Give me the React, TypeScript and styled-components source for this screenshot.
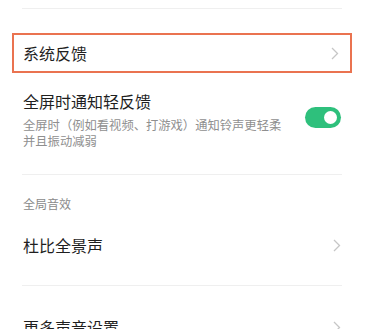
import React from 'react';
import styled, { createGlobalStyle } from 'styled-components';

const GlobalStyle = createGlobalStyle`
  html, body {
    margin: 0;
    padding: 0;
    background: #ffffff;
  }
  body {
    font-family: "Noto Sans CJK SC", "Noto Sans", sans-serif;
    color: #1f1f1f;
  }
`;

const Page = styled.div`
  width: 375px;
  height: 329px;
  overflow: hidden;
  background: #fff;
  padding: 8px 34px 0 23px;
  box-sizing: border-box;
`;

const Divider = styled.div<{ $gap: number }>`
  height: 1px;
  background: #efefef;
  margin: 0 -1px ${(p) => p.$gap}px -1px;
`;

const Row = styled.div<{ $highlight?: boolean }>`
  display: flex;
  align-items: center;
  justify-content: space-between;
  box-sizing: border-box;
  ${(p) =>
    p.$highlight
      ? `
    height: 40px;
    margin: 0 -11px;
    padding: 0 11px 0 9px;
    border: 2px solid #ea7350;
  `
      : ''}
`;

const Title = styled.div`
  font-size: 16px;
  line-height: 22px;
  color: #1f1f1f;
`;

const SubBlock = styled.div`
  display: flex;
  flex-direction: column;
  margin-top: 5px;
`;

const Sub = styled.span`
  font-size: 12.3px;
  line-height: 16px;
  color: #8f8f8f;
  white-space: nowrap;
`;

const Header = styled.div`
  font-size: 12px;
  line-height: 16px;
  color: #8a8a8a;
`;

const TextCol = styled.div`
  display: flex;
  flex-direction: column;
`;

const ToggleTrack = styled.div<{ $on: boolean }>`
  width: 36px;
  height: 21px;
  border-radius: 11px;
  background: ${(p) => (p.$on ? '#2ec07c' : '#d9d9d9')};
  position: relative;
  flex-shrink: 0;
  margin-bottom: 4px;
`;

const Knob = styled.div<{ $on: boolean }>`
  position: absolute;
  top: 4px;
  ${(p) => (p.$on ? 'right: 4px;' : 'left: 4px;')}
  width: 13px;
  height: 13px;
  border-radius: 50%;
  background: #fff;
`;

const Spacer = styled.div<{ $h: number }>`
  height: ${(p) => p.$h}px;
`;

const Chevron = () => (
  <svg width="8" height="13" viewBox="0 0 8 13" fill="none">
    <path d="M1 1 L6.5 6.5 L1 12" stroke="#c6c6c6" strokeWidth="1.3" />
  </svg>
);

export default function App() {
  return (
    <Page>
      <GlobalStyle />
      <Divider $gap={24} />
      <Row $highlight>
        <Title>系统反馈</Title>
        <Chevron />
      </Row>
      <Spacer $h={17} />
      <Row>
        <TextCol>
          <Title>全屏时通知轻反馈</Title>
          <SubBlock>
            <Sub>全屏时（例如看视频、打游戏）通知铃声更轻柔</Sub>
            <Sub>并且振动减弱</Sub>
          </SubBlock>
        </TextCol>
        <ToggleTrack $on>
          <Knob $on />
        </ToggleTrack>
      </Row>
      <Spacer $h={25} />
      <Divider $gap={21} />
      <Header>全局音效</Header>
      <Spacer $h={22} />
      <Row>
        <Title>杜比全景声</Title>
        <Chevron />
      </Row>
      <Spacer $h={29} />
      <Divider $gap={30} />
      <Row>
        <Title>更多声音设置</Title>
        <Chevron />
      </Row>
    </Page>
  );
}
